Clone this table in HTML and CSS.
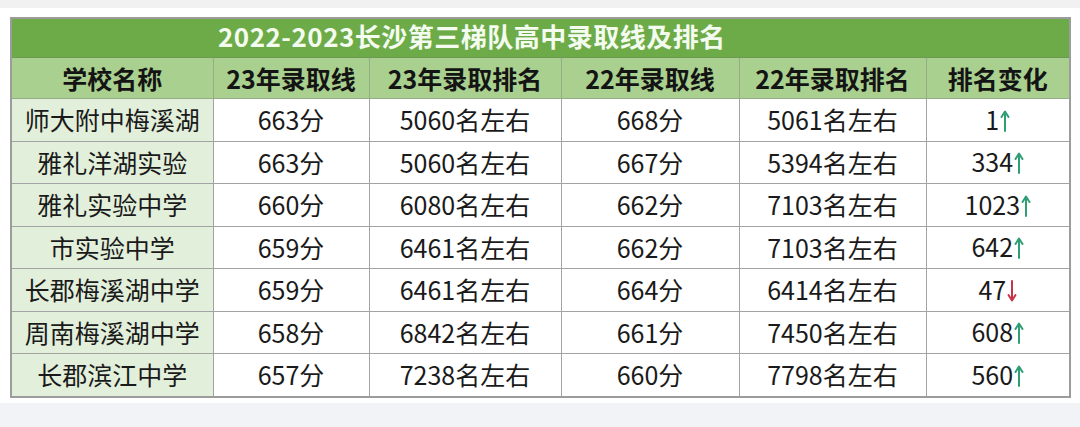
FILE: index.html
```html
<!DOCTYPE html>
<html lang="zh-CN">
<head>
<meta charset="utf-8">
<link rel="stylesheet" href="styles.css">
</head>
<body>
<div class="band-top"></div>
<div class="sheet">
  <table class="rank">
    <colgroup>
      <col class="c1"><col class="c2"><col class="c3"><col class="c4"><col class="c5"><col class="c6">
    </colgroup>
    <tr class="title-row">
      <td colspan="6" class="title"><span class="title-text">2022-2023长沙第三梯队高中录取线及排名</span></td>
    </tr>
    <tr class="head-row">
      <th>学校名称</th><th>23年录取线</th><th>23年录取排名</th><th>22年录取线</th><th>22年录取排名</th><th>排名变化</th>
    </tr>
    <tr><td class="name">师大附中梅溪湖</td><td>663分</td><td>5060名左右</td><td>668分</td><td>5061名左右</td><td>1<svg class="arr up" viewBox="0 0 10 24"><path d="M5 22V3M1.5 8L5 2.5L8.5 8"/></svg></td></tr>
    <tr><td class="name">雅礼洋湖实验</td><td>663分</td><td>5060名左右</td><td>667分</td><td>5394名左右</td><td>334<svg class="arr up" viewBox="0 0 10 24"><path d="M5 22V3M1.5 8L5 2.5L8.5 8"/></svg></td></tr>
    <tr><td class="name">雅礼实验中学</td><td>660分</td><td>6080名左右</td><td>662分</td><td>7103名左右</td><td>1023<svg class="arr up" viewBox="0 0 10 24"><path d="M5 22V3M1.5 8L5 2.5L8.5 8"/></svg></td></tr>
    <tr><td class="name">市实验中学</td><td>659分</td><td>6461名左右</td><td>662分</td><td>7103名左右</td><td>642<svg class="arr up" viewBox="0 0 10 24"><path d="M5 22V3M1.5 8L5 2.5L8.5 8"/></svg></td></tr>
    <tr><td class="name">长郡梅溪湖中学</td><td>659分</td><td>6461名左右</td><td>664分</td><td>6414名左右</td><td>47<svg class="arr down" viewBox="0 0 10 24"><path d="M5 2V21M1.5 16L5 21.5L8.5 16"/></svg></td></tr>
    <tr><td class="name">周南梅溪湖中学</td><td>658分</td><td>6842名左右</td><td>661分</td><td>7450名左右</td><td>608<svg class="arr up" viewBox="0 0 10 24"><path d="M5 22V3M1.5 8L5 2.5L8.5 8"/></svg></td></tr>
    <tr><td class="name">长郡滨江中学</td><td>657分</td><td>7238名左右</td><td>660分</td><td>7798名左右</td><td>560<svg class="arr up" viewBox="0 0 10 24"><path d="M5 22V3M1.5 8L5 2.5L8.5 8"/></svg></td></tr>
  </table>
</div>
<div class="band-bottom"></div>
</body>
</html>
```

FILE: styles.css
```css
html, body {
  margin: 0;
  padding: 0;
  background: #ffffff;
  width: 1080px;
  height: 427px;
  overflow: hidden;
  font-family: "Noto Sans CJK SC", "Noto Sans", sans-serif;
}
.band-top {
  height: 8px;
  background: #f1f1f1;
}
.sheet {
  height: 395px;
  padding: 9px 0 0 10px;
  box-sizing: border-box;
}
.band-bottom {
  height: 24px;
  background: #f2f3f7;
}
.rank {
  border-collapse: collapse;
  table-layout: fixed;
  width: 1059px;
  border: 2px solid #9c9c9c;
}
.c1 { width: 202px; }
.c2 { width: 156px; }
.c3 { width: 192px; }
.c4 { width: 178px; }
.c5 { width: 187px; }
.c6 { width: 144px; }
.rank td, .rank th {
  border: 1px solid #a3a3a3;
  text-align: center;
  padding: 0;
  font-size: 25px;
  line-height: 1;
  color: #1a1a1a;
  font-weight: 400;
}
.title-row td {
  height: 38px;
  background: #6dab48;
  border-color: #6c9a55;
}
.title {
  text-align: left !important;
  padding-left: 206px !important;
}
.title-text {
  color: #f4fbef;
  font-weight: 700;
  font-size: 26px;
  letter-spacing: 0.5px;
  position: relative;
  top: -2px;
}
.head-row th {
  height: 40px;
  background: #a9d08e;
  font-weight: 700;
  color: #141414;
  border-color: #95ad87;
}
.rank tr td {
  height: 41.5px;
}
.rank tr.title-row td { height: 38px; }
.rank td.name {
  background: #e2efda;
}
.arr {
  display: inline-block;
  width: 10px;
  height: 24px;
  margin-left: 1px;
  vertical-align: -3px;
  fill: none;
  stroke-width: 2;
  stroke-linecap: round;
  stroke-linejoin: round;
}
.arr.up { stroke: #2f9e74; }
.arr.down { stroke: #c9334a; }
```
